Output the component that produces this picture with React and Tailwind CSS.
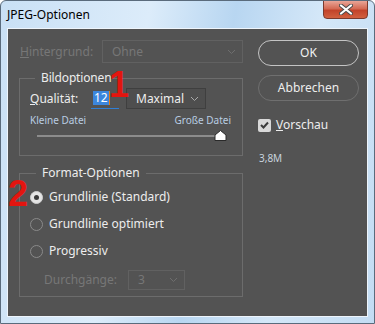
import React from 'react';

const font = { fontFamily: '"Noto Sans", "Open Sans", sans-serif' };
const redFont = { fontFamily: '"Liberation Sans", Arial, sans-serif' };

function Chevron({ color = '#a8a8a8' }) {
  return (
    <svg width="9" height="6" viewBox="0 0 9 6">
      <path d="M1 1 L4.5 4.5 L8 1" fill="none" stroke={color} strokeWidth="1" />
    </svg>
  );
}

function Radio({ checked, label }) {
  return (
    <div className="flex items-center h-[16px]">
      <span
        className={`w-[13px] h-[13px] rounded-full flex items-center justify-center ${
          checked ? 'bg-[#e4e4e4] border border-[#cfcfcf]' : 'border border-[#8a8a8a]'
        }`}
      >
        {checked && <span className="w-[5px] h-[5px] rounded-full bg-[#3a3a3a]" />}
      </span>
      <span className="ml-[6px] text-[12px] text-[#ededed]">{label}</span>
    </div>
  );
}

export default function App() {
  return (
    <div
      className="relative w-[375px] h-[324px] overflow-hidden rounded-t-[6px] border border-[#5a6b7c] bg-[linear-gradient(100deg,#c9e0f5_0%,#dcecfa_35%,#b8d6f1_55%,#d4e7f8_75%,#c3dcf3_100%)]"
      style={font}
    >
      {/* title bar */}
      <div className="h-[27px] flex items-center pl-[6px] text-[12px] text-black">JPEG-Optionen</div>

      {/* close button */}
      <div className="absolute top-[-1px] right-[6px] w-[45px] h-[19px] rounded-b-[4px] border border-[#7a3a2e] bg-[linear-gradient(180deg,#e9a597_0%,#d46a54_45%,#c2432a_55%,#d1603f_100%)] flex items-center justify-center">
        <svg width="14" height="11" viewBox="0 0 14 11">
          <path d="M2 1.5 L12 9.5 M12 1.5 L2 9.5" stroke="#4a4a4a" strokeWidth="4" strokeLinecap="round" />
          <path d="M2 1.5 L12 9.5 M12 1.5 L2 9.5" stroke="#ffffff" strokeWidth="2.2" strokeLinecap="round" />
        </svg>
      </div>

      {/* content */}
      <div className="relative mx-[6px] h-[289px] border border-[#eef5fc] bg-[#535353] flex pl-[11px] pt-[11px]">
        {/* left column */}
        <div className="w-[224px] flex flex-col">
          <div className="flex items-center h-[23px]">
            <span className="w-[83px] pl-[1px] text-[12px] text-[#777777]">
              <span className="underline">H</span>intergrund:
            </span>
            <div className="w-[141px] h-[23px] border border-[#616161] flex items-center justify-between pl-[9px] pr-[6px] text-[12px] text-[#777777]">
              <span>Ohne</span>
              <Chevron color="#6e6e6e" />
            </div>
          </div>

          <fieldset className="mt-[7px] h-[86px] border border-[#6c6c6c] px-[10px]">
            <legend className="ml-[5px] pl-[6px] pr-[1px] text-[12px] tracking-[-0.15px] text-[#ededed] leading-[16px]">Bildoptionen</legend>
            <div className="flex items-center h-[21px] mt-[2px]">
              <span className="w-[61px] text-[12px] text-[#ededed]">
                <span className="underline">Q</span>ualität:
              </span>
              <div className="w-[28px] h-[21px] flex items-center border-b border-[#2f7fd6] pl-[2px]">
                <span className="bg-[#3c86dc] text-white text-[12px] leading-[14px] px-[1px]">12</span>
                <span className="w-[1px] h-[14px] bg-[#e07b1a]" />
              </div>
              <div className="ml-[7px] w-[80px] h-[21px] border border-[#3f3f3f] bg-[#4e4e4e] flex items-center justify-between pl-[9px] pr-[6px] text-[12px] text-[#ededed]">
                <span>Maximal</span>
                <Chevron />
              </div>
            </div>
            <div className="mt-[5px] flex justify-between text-[10px] leading-[13px] text-[#b9cde2] pr-[1px]">
              <span>Kleine Datei</span>
              <span>Große Datei</span>
            </div>
            <div className="mt-[3px] flex items-center pl-[7px] h-[11px]">
              <div className="w-[183px] h-[2px] bg-[#8c8c8c]" />
              <svg width="13" height="11" viewBox="0 0 13 11" className="-ml-[6px]">
                <path d="M6.5 0.5 L12 5 L12 10.5 L1 10.5 L1 5 Z" fill="#ffffff" stroke="#2a2a2a" strokeWidth="1" />
              </svg>
            </div>
          </fieldset>

          <fieldset className="mt-[9px] h-[132px] border border-[#6c6c6c] px-[10px]">
            <legend className="ml-[6px] px-[6px] text-[12px] text-[#ededed] leading-[16px]">Format-Optionen</legend>
            <div className="flex flex-col gap-[11px] mt-[8px]">
              <Radio checked label="Grundlinie (Standard)" />
              <Radio label="Grundlinie optimiert" />
              <Radio label="Progressiv" />
            </div>
            <div className="flex items-center mt-[11px] pl-[14px]">
              <span className="w-[84px] text-[12px] text-[#777777]">Durchgänge:</span>
              <div className="w-[57px] h-[20px] border border-[#616161] flex items-center justify-between pl-[9px] pr-[6px] text-[12px] text-[#777777]">
                <span>3</span>
                <Chevron color="#6e6e6e" />
              </div>
            </div>
          </fieldset>
        </div>

        {/* right column */}
        <div className="ml-[15px] w-[101px] flex flex-col">
          <button className="h-[26px] rounded-full border border-[#c4c4c4] text-[12px] text-[#f2f2f2]">OK</button>
          <button className="mt-[9px] h-[26px] rounded-full border border-[#6f6f6f] text-[12px] text-[#ededed]">Abbrechen</button>
          <div className="mt-[15px] flex items-center">
            <span className="w-[13px] h-[13px] rounded-[2px] bg-[#d9d9d9] flex items-center justify-center">
              <svg width="9" height="8" viewBox="0 0 9 8">
                <path d="M1 4 L3.5 6.5 L8 1.5" fill="none" stroke="#3c3c3c" strokeWidth="2" />
              </svg>
            </span>
            <span className="ml-[5px] text-[12px] text-[#ededed]">
              <span className="underline">V</span>orschau
            </span>
          </div>
          <span className="mt-[17px] ml-[1px] text-[10px] text-[#c9d4de]">3,8M</span>
        </div>

        {/* red annotations */}
        <span className="absolute left-[101px] top-[38px] text-[36px] leading-[36px] font-bold text-[#e3150f]" style={redFont}>1</span>
        <span className="absolute left-[0px] top-[147px] text-[36px] leading-[36px] font-bold text-[#e3150f]" style={redFont}>2</span>
      </div>
    </div>
  );
}
